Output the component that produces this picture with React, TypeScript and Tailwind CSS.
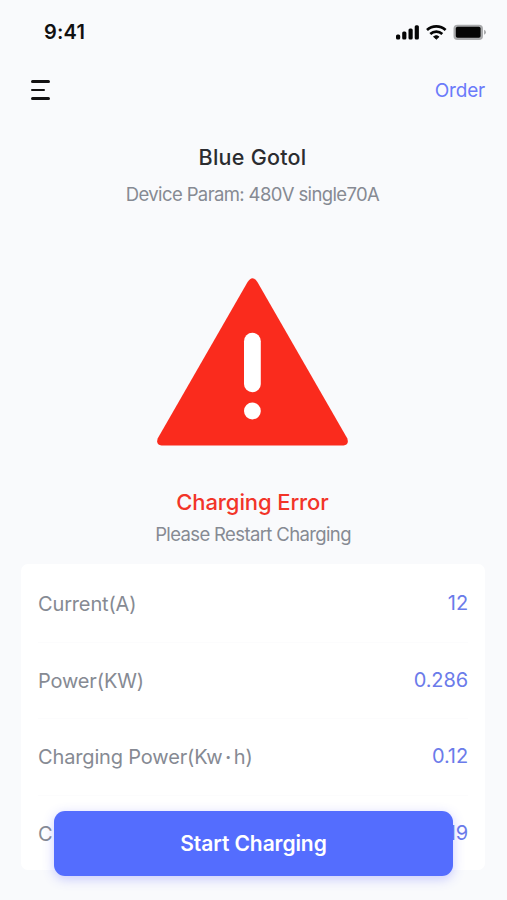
const rows = [
  { label: "Current(A)", value: "12" },
  { label: "Power(KW)", value: "0.286" },
  { label: "Charging Power(Kw·h)", value: "0.12" },
  { label: "C", value: "19" },
];

function StatusBar() {
  return (
    <div className="flex h-[63px] items-center justify-between pr-[19px] pl-[44px]">
      <span className="text-[20px] font-semibold tracking-[0.2px] text-[#111]">9:41</span>
      <svg width="92" height="18" viewBox="0 0 92 18" className="block">
        <g fill="#050505">
          <rect x="2" y="11.500" width="4.200" height="5" rx="1.500" />
          <rect x="8.200" y="8.500" width="4.200" height="8" rx="1.500" />
          <rect x="14.500" y="5.500" width="4.200" height="11" rx="1.500" />
          <rect x="20.700" y="2.300" width="4.200" height="14.200" rx="1.500" />
          <path d="M42.300 16.300l-2.800-2.600q2.800-2.200 5.600 0z" stroke="#050505" strokeWidth="0.8" strokeLinejoin="round" />
        </g>
        <g fill="none" stroke="#050505" strokeWidth="2.700">
          <path d="M33 7.100a13.700 13.700 0 0 1 18.600 0" />
          <path d="M36.300 10.900a9 9 0 0 1 12 0" />
        </g>
        <rect x="59.500" y="1.700" width="29.500" height="15.200" rx="4" fill="#a9aaac" />
        <rect x="61.800" y="3.700" width="24.800" height="11" rx="1.800" fill="#050505" />
        <path d="M90 6.700v5q2-.8 2-2.500t-2-2.500z" fill="#aaabad" />
      </svg>
    </div>
  );
}

function WarningIcon() {
  return (
    <svg width="194" height="170" viewBox="0 0 194 170" className="block">
      <path
        d="M91.600 5.100Q96.500-2.700 101.400 5.100L191.200 161.300Q193.500 167.800 187.500 168.500H5.500Q-0.500 167.800 1.800 161.300Z"
        fill="#fa2b1d"
      />
      <rect x="88" y="55.800" width="16.800" height="59.500" rx="8.400" fill="#fff" />
      <circle cx="96.400" cy="134" r="8.400" fill="#fff" />
    </svg>
  );
}

function RowLabel({ text }: { text: string }) {
  const [before, after] = text.split("·");
  return (
    <span className="text-[20px] tracking-[-0.15px] text-[#868a93]">
      {before}
      {after && (
        <>
          <span className="mx-[2.500px] font-semibold">·</span>
          {after}
        </>
      )}
    </span>
  );
}

export default function App() {
  return (
    <div className="relative h-[900px] w-[507px] overflow-hidden bg-[#f9fafc] pr-[2px] font-['Inter','Liberation_Sans',sans-serif]">
      <StatusBar />
      <header className="flex h-[54px] items-center justify-between pr-[20px] pl-[31px]">
        <button aria-label="Menu" className="flex flex-col gap-[5.500px]">
          <span className="h-[2.800px] w-[19px] rounded-full bg-[#111]" />
          <span className="h-[2.800px] w-[13.500px] rounded-full bg-[#111]" />
          <span className="h-[2.800px] w-[19px] rounded-full bg-[#111]" />
        </button>
        <a className="pt-[2px] text-[19px] tracking-[-0.2px] text-[#6b7bfa]">Order</a>
      </header>

      <section className="flex flex-col items-center pt-[25px]">
        <h1 className="text-[21.500px] leading-[30px] font-medium tracking-[0.250px] text-[#2b2c30]">Blue Gotol</h1>
        <p className="mt-[8px] text-[18.500px] leading-[28px] tracking-[-0.620px] text-[#868a93]">Device Param: 480V single70A</p>
        <div className="mt-[69px]">
          <WarningIcon />
        </div>
        <h2 className="mt-[40px] text-[22px] leading-[30px] font-medium tracking-[-0.100px] text-[#f23428]">Charging Error</h2>
        <p className="mt-[3px] pl-[1px] text-[18.500px] leading-[28px] tracking-[-0.630px] text-[#868a93]">Please Restart Charging</p>
      </section>

      <section className="mt-[16px] mr-[20px] ml-[21px] h-[306px] rounded-[7px] bg-white pt-[2px] pr-[17px] pl-[17px]">
        {rows.map((row) => (
          <div key={row.label} className="flex h-[76.700px] items-center justify-between border-b border-[#fcfcfd] last:border-0">
            <RowLabel text={row.label} />
            <span className="pb-[2px] text-[20px] tracking-[-0.100px] text-[#6b7bea]">{row.value}</span>
          </div>
        ))}
      </section>

      <button className="absolute top-[811px] left-[54px] h-[65px] w-[399px] rounded-[11px] bg-[#546dfe] text-[21px] font-semibold tracking-[-0.080px] text-white shadow-[0_3px_12px_rgba(84,90,254,0.3)]">
        Start Charging
      </button>
    </div>
  );
}
